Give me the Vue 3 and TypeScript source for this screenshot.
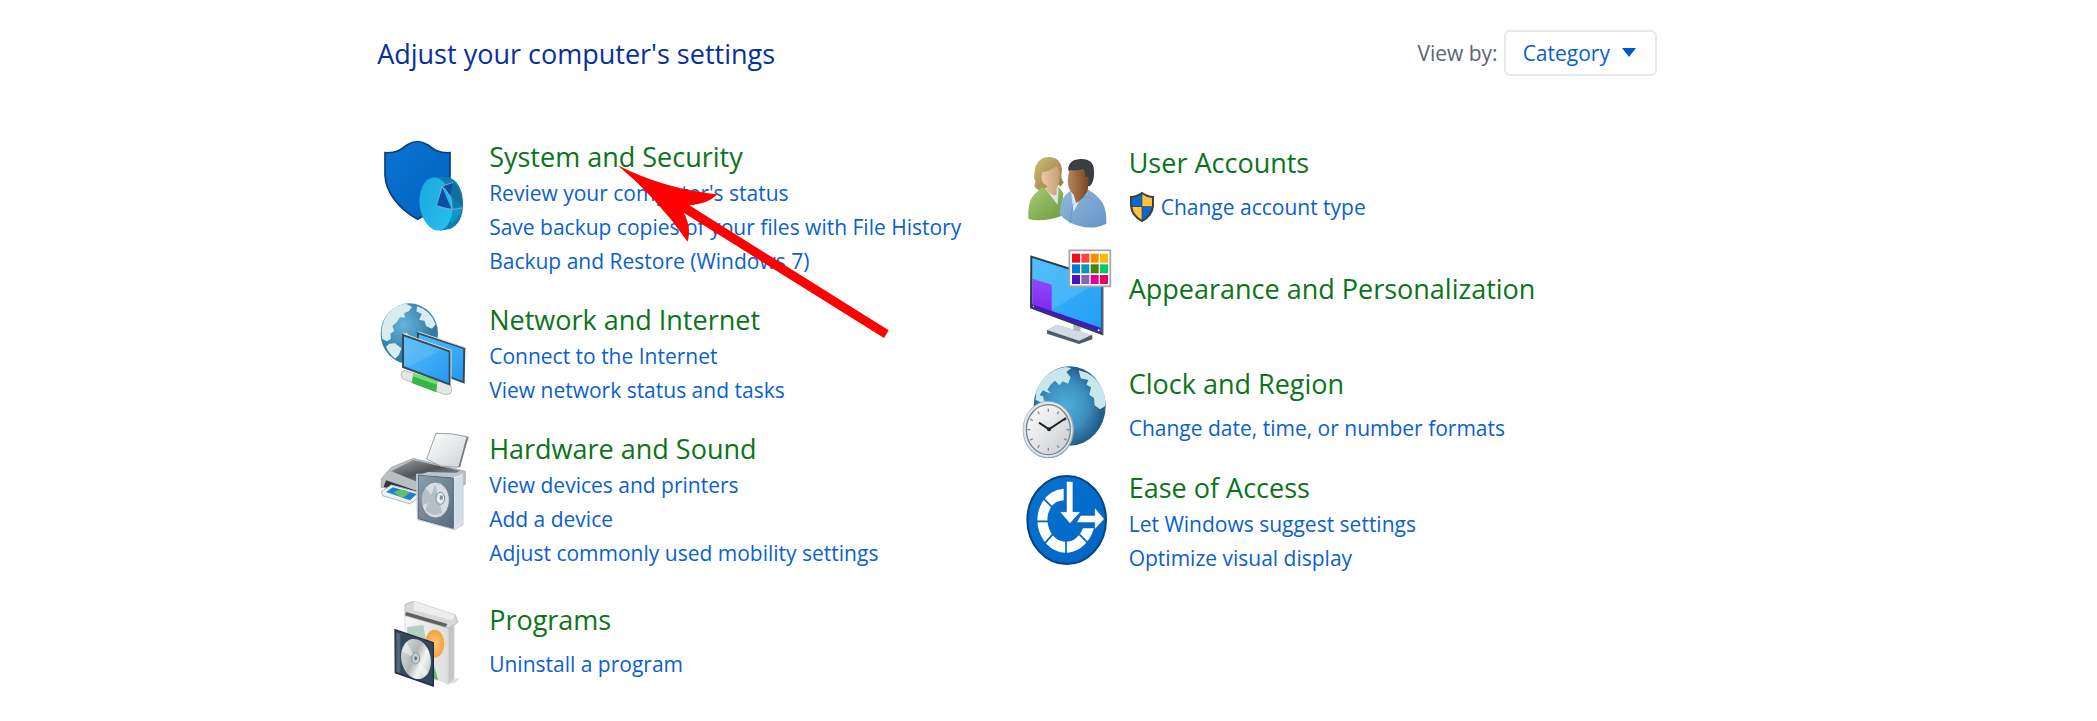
<script setup lang="ts">
import { ref } from 'vue'

type IconName = 'security' | 'network' | 'hardware' | 'programs' | 'users' | 'appearance' | 'clock' | 'ease'

interface Category {
  icon: IconName
  title: string
  links: string[]
  top: number
  shield?: boolean
}

const view = ref('Category')

const columns: Category[][] = [
  [
    { icon: 'security', title: 'System and Security', top: 21, links: ["Review your computer's status", 'Save backup copies of your files with File History', 'Backup and Restore (Windows 7)'] },
    { icon: 'network', title: 'Network and Internet', top: 15, links: ['Connect to the Internet', 'View network status and tasks'] },
    { icon: 'hardware', title: 'Hardware and Sound', top: 24, links: ['View devices and printers', 'Add a device', 'Adjust commonly used mobility settings'] },
    { icon: 'programs', title: 'Programs', top: 30, links: ['Uninstall a program'] },
  ],
  [
    { icon: 'users', title: 'User Accounts', top: 9, shield: true, links: ['Change account type'] },
    { icon: 'appearance', title: 'Appearance and Personalization', top: 21, links: [] },
    { icon: 'clock', title: 'Clock and Region', top: 27, links: ['Change date, time, or number formats'] },
    { icon: 'ease', title: 'Ease of Access', top: 6, links: ['Let Windows suggest settings', 'Optimize visual display'] },
  ],
]

const swatches = ['#e81123', '#ff4343', '#ff8c00', '#ffb900', '#0078d7', '#0099bc', '#498205', '#00cc6a', '#4b10c4', '#8764b8', '#e3008c', '#ea005e']
const ticks = Array.from({ length: 12 }, (_, i) => i * 30)
</script>

<template>
  <main class="panel">
    <header class="bar">
      <h1>Adjust your computer's settings</h1>
      <div class="view">
        <label for="view-by">View by:</label>
        <span class="picker">
          <select id="view-by" v-model="view">
            <option>Category</option>
            <option>Large icons</option>
            <option>Small icons</option>
          </select>
          <svg class="caret" viewBox="0 0 14 9" aria-hidden="true"><path d="M0 0H14L7 9Z" fill="#0058c8" /></svg>
        </span>
      </div>
    </header>

    <div class="grid">
      <div v-for="(column, c) in columns" :key="c" class="column">
        <section v-for="item in column" :key="item.title" class="item" :class="item.icon">
          <svg class="icon" :viewBox="`0 ${item.top} 330 288`" aria-hidden="true">
            <g v-if="item.icon === 'security'">
              <defs>
                <linearGradient id="sh" x1="0" y1="0" x2="1" y2="1"><stop offset="0" stop-color="#0a74d4" /><stop offset="1" stop-color="#0062be" /></linearGradient>
                <linearGradient id="pie" x1="0" y1="0" x2="1" y2="1"><stop offset="0" stop-color="#1ba8de" /><stop offset="1" stop-color="#27c0ee" /></linearGradient>
              </defs>
              <path d="M42 68C76 70 92 58 108 45Q139 24 171 45C187 58 203 70 237 68V140C235 205 190 240 140 268C88 239 44 190 42 135Z" fill="url(#sh)" stroke="#0b3f73" stroke-width="5" />
              <path d="M188 143Q216 136 240 145C265 156 276 190 276 221C276 260 264 284 237 297L207 302Z" fill="#0d7fae" />
              <path d="M240 281Q268 262 275 228L240 240Z" fill="#1297c9" />
              <ellipse cx="195" cy="222" rx="49" ry="80" fill="url(#pie)" transform="rotate(-7 195 222)" />
              <path d="M214 167L246 157L239 197ZM214 173L242 238L196 226Z" fill="#0b4ea2" />
              <path d="M246 157Q272 174 275 232L242 199Z" fill="#146f9e" />
              <path d="M214 168Q243 196 243 241M196 227Q235 244 275 234M196 227L214 168L247 157" fill="none" stroke="#77a9d1" stroke-width="3" />
            </g>

            <g v-else-if="item.icon === 'network'">
              <defs>
                <radialGradient id="gl" cx=".4" cy=".35"><stop offset="0" stop-color="#65b4da" /><stop offset="1" stop-color="#347ca6" /></radialGradient>
                <linearGradient id="scr" x1="0" y1="0" x2="1" y2="1"><stop offset="0" stop-color="#53b8f7" /><stop offset=".55" stop-color="#3daaf5" /><stop offset="1" stop-color="#1f96ef" /></linearGradient>
              </defs>
              <ellipse cx="115" cy="116" rx="86" ry="91" fill="url(#gl)" />
              <path d="M36 86C47 48 78 28 105 26L123 36L113 49L99 55L102 68L87 67L77 82L64 93L70 108L58 116L60 131L48 139L34 132Q29 105 36 86ZM55 146L72 145L91 160L84 180L72 191Q52 173 45 155ZM139 34Q179 47 194 88L183 101L166 94L160 77L145 74L152 57L136 49ZM98 118L107 113L115 124L103 129Z" fill="#d9edf0" />
              <path d="M92 233Q96 224 108 229L236 269Q247 278 238 296L223 299L94 251Q88 242 92 233Z" fill="#e3e7e5" stroke="#babfbe" stroke-width="3" />
              <path d="M127 235L199 258L196 292L122 264Z" fill="#36b548" />
              <path d="M127 235L199 258L198 269L125 244Z" fill="#79df72" />
              <path d="M141 114L280 160L278 262L138 209Z" fill="url(#scr)" stroke="#344b5a" stroke-width="6" />
              <path d="M96 120L236 169V268L96 216Z" fill="url(#scr)" stroke="#344b5a" stroke-width="6" />
              <path d="M140 110L283 158M95 115L240 166V269" fill="none" stroke="#d6dadd" stroke-width="3" />
              <path d="M100 125L212 164L109 216L100 213Z" fill="#a3dcff" opacity=".2" />
            </g>

            <g v-else-if="item.icon === 'hardware'">
              <defs>
                <linearGradient id="paper" x1="0" y1="0" x2="1" y2="1"><stop offset="0" stop-color="#fff" /><stop offset="1" stop-color="#ced1d3" /></linearGradient>
                <linearGradient id="prt" x1="0" y1="0" x2="1" y2="1"><stop offset="0" stop-color="#9da2a5" /><stop offset=".5" stop-color="#50565a" /><stop offset="1" stop-color="#959ca1" /></linearGradient>
                <linearGradient id="spk" x1="0" y1="0" x2="1" y2="1"><stop offset="0" stop-color="#8d9eac" /><stop offset="1" stop-color="#566c7e" /></linearGradient>
              </defs>
              <path d="M31 173L61 139L127 112L283 151V190L221 224L30 199Z" fill="#b9bec1" stroke="#929ba1" stroke-width="2" />
              <path d="M61 151L127 117L267 149L213 179L135 181Z" fill="url(#prt)" />
              <path d="M167 114L195 37Q244 35 292 48L263 139L209 135Z" fill="url(#paper)" stroke="#9ca0a2" stroke-width="3" />
              <path d="M289 49L265 138" stroke="#75797c" stroke-width="5" />
              <path d="M45 178L141 211V233L38 197Z" fill="#30363a" />
              <path d="M31 212L61 192L154 217L119 249L35 224Z" fill="#eef4f5" stroke="#aeb6bb" stroke-width="3" />
              <path d="M45 213L65 199L138 219L117 238Z" fill="#257fd1" />
              <path d="M68 215Q91 197 116 215L95 231Z" fill="#59c46c" />
              <path d="M137 159L247 168L276 156L276 311L250 326L139 296Z" fill="#dce2e8" stroke="#c4cbd2" stroke-width="3" />
              <path d="M142 162L247 171V322L142 293Z" fill="url(#spk)" stroke="#536777" stroke-width="3" />
              <path d="M142 161L172 153L276 156L247 169Z" fill="#b9c5cf" />
              <ellipse cx="193" cy="237" rx="42" ry="54" fill="#d8dee3" stroke="#72838f" stroke-width="3" />
              <path d="M193 190L163 266Q187 293 213 275ZM164 202Q143 225 154 253L193 237Z" fill="#9daab4" opacity=".6" />
              <ellipse cx="208" cy="232" rx="13" ry="18" fill="#e8edf0" stroke="#7f8d98" stroke-width="3" />
              <ellipse cx="211" cy="230" rx="5" ry="7" fill="#84939e" />
              <path d="M252 174L271 167V303L255 313Z" fill="#cfdfea" />
            </g>

            <g v-else-if="item.icon === 'programs'">
              <defs>
                <linearGradient id="box" x1="0" y1="0" x2="1" y2="0"><stop offset="0" stop-color="#f6f6f6" /><stop offset="1" stop-color="#dedede" /></linearGradient>
                <linearGradient id="disc" x1="0" y1="0" x2="1" y2="1"><stop offset="0" stop-color="#e6e8e7" /><stop offset=".45" stop-color="#afb8b7" /><stop offset=".65" stop-color="#f3f5f4" /><stop offset="1" stop-color="#aab5b3" /></linearGradient>
                <radialGradient id="or"><stop offset="0" stop-color="#ffc477" /><stop offset="1" stop-color="#f3a33f" /></radialGradient>
              </defs>
              <path d="M219 278L267 263L253 277L231 284Z" fill="#ddd" />
              <path d="M102 77L232 114V280L102 240Z" fill="url(#box)" stroke="#d0d0d0" stroke-width="2" />
              <path d="M232 114L250 105V268L232 280Z" fill="#c6c6c6" />
              <path d="M102 43L129 34L253 75L260 97L234 115L102 76Z" fill="#d8d8d8" stroke="#bbb" stroke-width="3" />
              <path d="M106 66L229 102L224 111L102 76Z" fill="#5e605f" />
              <path d="M129 34L253 75L243 91L128 60Z" fill="#ededed" />
              <path d="M109 111L157 105L167 165L106 154Z" fill="#b4cebf" />
              <ellipse cx="191" cy="161" rx="29" ry="42" fill="url(#or)" />
              <path d="M190 228L201 270L188 267Z" fill="#65b578" />
              <path d="M72 119L187 158V288L73 248Z" fill="#34465a" stroke="#202f40" stroke-width="4" />
              <path d="M76 127L88 131V249L76 245Z" fill="#52677b" />
              <ellipse cx="135" cy="207" rx="44" ry="61" fill="url(#disc)" transform="rotate(-12 135 207)" />
              <path d="M134 207L107 155L93 183ZM136 207L157 260L173 249Z" fill="#fff" opacity=".45" />
              <ellipse cx="134" cy="205" rx="12" ry="17" fill="#c8cece" stroke="#809096" stroke-width="3" />
              <ellipse cx="134" cy="205" rx="4" ry="6" fill="#607282" />
            </g>

            <g v-else-if="item.icon === 'users'">
              <defs>
                <linearGradient id="hair" x1="0" y1="0" x2="1" y2="1"><stop offset="0" stop-color="#d0bc79" /><stop offset="1" stop-color="#8e783f" /></linearGradient>
                <linearGradient id="skinA"><stop offset="0" stop-color="#ebc9a8" /><stop offset="1" stop-color="#ca9d77" /></linearGradient>
                <linearGradient id="skinB"><stop offset="0" stop-color="#b78560" /><stop offset="1" stop-color="#76451f" /></linearGradient>
                <linearGradient id="green" x1="0" y1="0" x2="1" y2="1"><stop offset="0" stop-color="#a9cc77" /><stop offset="1" stop-color="#6d9a3d" /></linearGradient>
                <linearGradient id="blue" x1="0" y1="0" x2="1" y2="1"><stop offset="0" stop-color="#91b9e2" /><stop offset="1" stop-color="#6694c4" /></linearGradient>
              </defs>
              <path d="M73 80Q84 50 117 51Q148 53 153 86L151 113L158 128L148 140L136 128L107 148Q81 158 70 139L73 125Q68 116 70 101Z" fill="url(#hair)" />
              <path d="M92 142Q119 157 143 140L157 160L151 228Q93 248 52 237Q49 184 68 166Z" fill="url(#green)" />
              <path d="M101 144L143 142L140 194Z" fill="#dbe6e7" />
              <path d="M93 97Q119 93 136 78Q150 91 145 120Q143 137 137 146L137 164Q124 169 107 153L107 136Q86 131 93 97Z" fill="url(#skinA)" />
              <path d="M177 153L232 149Q263 167 275 190Q287 210 286 251Q248 270 205 258Q169 250 146 223Q149 178 164 164Z" fill="url(#blue)" />
              <path d="M180 153L215 165L187 216Z" fill="#dbe6f2" />
              <path d="M172 92Q170 60 207 57Q249 55 249 93Q251 125 236 139L219 136Z" fill="#3b3e43" />
              <path d="M175 90Q201 94 217 86Q224 97 223 111Q236 107 233 125L230 152Q211 184 195 188L188 164Q166 144 171 112Z" fill="url(#skinB)" />
              <path d="M186 190L177 251M214 175Q237 162 249 186" fill="none" stroke="#648ebb" stroke-width="2" />
            </g>

            <g v-else-if="item.icon === 'appearance'">
              <defs>
                <linearGradient id="mon" x1="0" y1="0" x2="1" y2="1"><stop offset="0" stop-color="#42b7fb" /><stop offset="1" stop-color="#229df5" /></linearGradient>
                <linearGradient id="pur" x1="0" y1="0" x2="0" y2="1"><stop offset="0" stop-color="#9148ff" /><stop offset="1" stop-color="#8226e6" /></linearGradient>
              </defs>
              <path d="M108 271L137 255L244 286V298L204 312L108 281Z" fill="#505c65" />
              <path d="M108 270L138 254L244 284L204 302Z" fill="#d1dbe1" />
              <path d="M187 239L209 244V275L187 271Z" fill="#aebac2" />
              <path d="M61 50L274 117V282L60 203Z" fill="url(#mon)" stroke="#303a45" stroke-width="6" />
              <path d="M64 55L270 123L125 208L64 182Z" fill="#8fe0ff" opacity=".22" />
              <path d="M64 116L122 134V220L64 200Z" fill="url(#pur)" />
              <path d="M63 193L269 263V277L63 203Z" fill="#4219bf" />
              <path d="M277 117V283" stroke="#aab1b8" stroke-width="4" />
              <circle cx="67" cy="199" r="2" fill="#fff" /><circle cx="263" cy="271" r="3" fill="#fff" />
              <rect x="175" y="31" width="123" height="108" fill="#fff" stroke="#a3a3a3" stroke-width="5" />
              <rect v-for="(color, i) in swatches" :key="color" :x="183 + (i % 4) * 28" :y="41 + Math.floor(i / 4) * 32" width="24" height="27" :fill="color" />
            </g>

            <g v-else-if="item.icon === 'clock'">
              <defs>
                <radialGradient id="earth" cx=".45" cy=".5"><stop offset="0" stop-color="#51acd8" /><stop offset=".6" stop-color="#3c8fc0" /><stop offset="1" stop-color="#245f89" /></radialGradient>
                <linearGradient id="face" x1="0" y1="0" x2="1" y2="1"><stop offset="0" stop-color="#fff" /><stop offset="1" stop-color="#c9cbd1" /></linearGradient>
              </defs>
              <ellipse cx="176" cy="153" rx="108" ry="119" fill="url(#earth)" />
              <path d="M76 107Q96 49 162 36L181 39L166 51L179 67L171 86L155 79L145 91L132 77L119 89L109 104L120 115L105 110L96 106L86 121L96 123L99 137L114 139L97 146L74 134ZM203 46Q249 56 272 97Q286 125 282 154L267 163L251 151L249 129L235 119L240 97L226 89L232 75L209 70Z" fill="#c8e7eb" />
              <ellipse cx="112" cy="224" rx="77" ry="86" fill="#9ca9b4" />
              <ellipse cx="111" cy="223" rx="74" ry="83" fill="#dce6ed" />
              <ellipse cx="112" cy="224" rx="66" ry="75" fill="url(#face)" stroke="#78838c" stroke-width="4" />
              <g stroke="#858a91" stroke-width="4">
                <path v-for="angle in ticks" :key="angle" d="M112 161V170" :transform="`rotate(${angle} 112 224)`" />
              </g>
              <path d="M165 189L114 223L84 203" fill="none" stroke="#202226" stroke-width="6" />
              <circle cx="114" cy="223" r="6" fill="#202226" />
            </g>

            <g v-else>
              <defs>
                <linearGradient id="ea" x1="0" y1="0" x2="1" y2="1"><stop offset="0" stop-color="#0873d2" /><stop offset="1" stop-color="#0065c4" /></linearGradient>
              </defs>
              <ellipse cx="167" cy="162" rx="118" ry="132" fill="url(#ea)" stroke="#07447e" stroke-width="6" />
              <path d="M158 68Q116 72 94 108C72 145 74 194 104 231C133 263 173 270 209 246Q239 224 249 187H216Q206 211 187 222C159 235 131 221 118 197C104 168 107 137 126 116Q139 104 158 103Z" fill="#fff" />
              <path d="M96 96L127 127M76 166H111M98 236L127 203M165 223V266M205 205L239 239" stroke="#0065bd" stroke-width="5" />
              <path d="M166 46H186V137H209L177 173L146 137H166ZM209 148H251V124L280 159L251 191V170H196Z" fill="#fff" stroke="#07579f" stroke-width="2" />
            </g>
          </svg>

          <div class="copy">
            <h2><a href="#">{{ item.title }}</a></h2>
            <ul v-if="item.links.length">
              <li v-for="link in item.links" :key="link">
                <svg v-if="item.shield" class="uac" viewBox="0 0 78 96" aria-hidden="true">
                  <path d="M39 2Q53 14 75 15V45Q72 77 39 94Q6 77 3 45V15Q25 14 39 2Z" fill="#3c4044" />
                  <path d="M38 10V46H9V21Q25 20 38 10ZM40 48H68Q64 73 40 86Z" fill="#0d68cd" />
                  <path d="M40 10Q53 20 69 21V46H40ZM38 48H10Q14 73 38 86Z" fill="#ffc33c" />
                </svg>
                <a href="#">{{ link }}</a>
              </li>
            </ul>
          </div>
        </section>
      </div>

      <svg class="arrow" viewBox="0 0 870 630" aria-hidden="true">
        <path d="M50 106Q190 177 348 193Q327 220 265 226L863 601L849 624L248 248Q272 290 260 335Q167 203 50 106Z" fill="#f00" />
      </svg>
    </div>
  </main>
</template>

<style>
body {
  margin: 0;
  background: #fff;
}
</style>

<style scoped>
.panel {
  box-sizing: border-box;
  padding: 28px 21% 16px 17.7%;
  font-family: "Open Sans", "Noto Sans", sans-serif;
  font-size: 21px;
  line-height: 34px;
  color: #0b5fd0;
}

.bar {
  display: flex;
  justify-content: space-between;
  align-items: center;
  height: 50px;
  padding-left: 6px;
}

h1,
h2 {
  margin: 0;
  font-weight: 400;
  font-size: 27px;
  line-height: 39px;
  white-space: nowrap;
}

h1 {
  color: #08309c;
}

.view {
  display: flex;
  align-items: center;
  gap: 6px;
  color: #5c6470;
}

.picker {
  position: relative;
  display: flex;
}

select {
  appearance: none;
  width: 153px;
  height: 46px;
  padding: 0 34px 0 17px;
  border: 2px solid #e4e9ef;
  border-radius: 6px;
  background: #fff;
  color: #0b5fd0;
  font: inherit;
}

.caret {
  position: absolute;
  top: 18px;
  right: 21px;
  width: 14px;
  height: 9px;
  pointer-events: none;
}

.grid {
  position: relative;
  display: grid;
  grid-template-columns: minmax(0, 1fr) minmax(0, 1.01fr);
  padding-top: 59px;
}

.column {
  display: flex;
  flex-direction: column;
  gap: 22px;
}

.column + .column {
  gap: 8px;
  padding-top: 6px;
}

.item {
  display: flex;
  align-items: flex-start;
  gap: 8px;
}

.icon {
  flex: none;
  width: 110px;
  height: 96px;
  overflow: visible;
}

.copy {
  min-width: 0;
}

.programs {
  margin-top: 8px;
}

.clock {
  margin-top: 13px;
}

.appearance .copy {
  padding-top: 22px;
}

.programs ul,
.users ul,
.clock ul {
  padding-top: 8px;
}

ul {
  margin: 0;
  padding: 0;
  list-style: none;
}

li {
  display: flex;
  align-items: center;
  gap: 6px;
  white-space: nowrap;
}

a {
  color: inherit;
  text-decoration: none;
}

a:hover {
  text-decoration: underline;
}

h2 {
  color: #0b7418;
}

.uac {
  width: 26px;
  height: 32px;
}

.arrow {
  position: absolute;
  top: 52px;
  left: 230px;
  width: 290px;
  height: 210px;
  pointer-events: none;
}
</style>
